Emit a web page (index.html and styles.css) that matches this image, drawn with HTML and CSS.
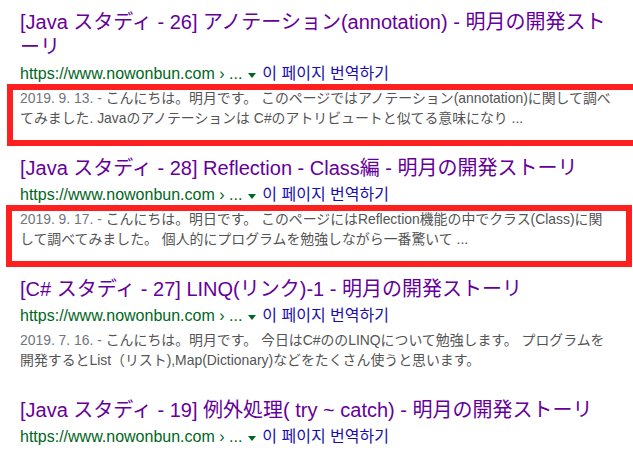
FILE: index.html
```html
<!DOCTYPE html>
<html lang="ja">
<head>
<meta charset="utf-8">
<title>Search results</title>
<link rel="stylesheet" href="styles.css">
</head>
<body>
<div class="results">
  <div class="result">
    <h3 class="title">[Java スタディ - 26] アノテーション(annotation) - 明月の開発スト<br>ーリ</h3>
    <div class="urlline"><span class="url">https://www.nowonbun.com › ...</span><span class="arrow"></span><span class="translate" lang="ko">이 페이지 번역하기</span></div>
    <div class="snippet"><span class="date">2019. 9. 13. - </span>こんにちは。明月です。 このページではアノテーション(annotation)に関して調べ<br>てみました. Javaのアノテーションは C#のアトリビュートと似てる意味になり ...</div>
  </div>
  <div class="result">
    <h3 class="title">[Java スタディ - 28] Reflection - Class編 - 明月の開発ストーリ</h3>
    <div class="urlline"><span class="url">https://www.nowonbun.com › ...</span><span class="arrow"></span><span class="translate" lang="ko">이 페이지 번역하기</span></div>
    <div class="snippet"><span class="date">2019. 9. 17. - </span>こんにちは。明日です。 このページにはReflection機能の中でクラス(Class)に関<br>して調べてみました。 個人的にプログラムを勉強しながら一番驚いて ...</div>
  </div>
  <div class="result">
    <h3 class="title">[C# スタディ - 27] LINQ(リンク)-1 - 明月の開発ストーリ</h3>
    <div class="urlline"><span class="url">https://www.nowonbun.com › ...</span><span class="arrow"></span><span class="translate" lang="ko">이 페이지 번역하기</span></div>
    <div class="snippet"><span class="date">2019. 7. 16. - </span>こんにちは。明月です。 今日はC#ののLINQについて勉強します。 プログラムを<br>開発するとList（リスト),Map(Dictionary)などをたくさん使うと思います。</div>
  </div>
  <div class="result">
    <h3 class="title">[Java スタディ - 19] 例外処理( try ~ catch) - 明月の開発ストーリ</h3>
    <div class="urlline"><span class="url">https://www.nowonbun.com › ...</span><span class="arrow"></span><span class="translate" lang="ko">이 페이지 번역하기</span></div>
    <div class="snippet"><span class="date">2019. 9. 9. - </span>こんにちは。明月です。 このページでは例外処理に関して調べてみました。 例外<br>処理は...</div>
  </div>
</div>
<div class="mark mark-1"></div>
<div class="mark mark-2"></div>
</body>
</html>
```
FILE: styles.css
```css
html, body {
  margin: 0;
  padding: 0;
  background: #ffffff;
  overflow: hidden;
}
body {
  width: 633px;
  height: 454px;
  position: relative;
  font-family: "Liberation Sans", Arial, "Noto Sans CJK JP", sans-serif;
}
.results {
  padding: 10px 0 0 20px;
  display: flex;
  flex-direction: column;
  gap: 28px;
}
.result {
  display: flex;
  flex-direction: column;
}
.title {
  margin: 0;
  font-size: 20px;
  line-height: 25px;
  font-weight: normal;
  color: #660099;
  white-space: nowrap;
}
.urlline {
  margin-top: 2px;
  font-size: 16px;
  line-height: 24px;
  white-space: nowrap;
  display: flex;
  align-items: center;
}
.url {
  color: #006621;
}
.arrow {
  width: 0;
  height: 0;
  border-left: 4px solid transparent;
  border-right: 4px solid transparent;
  border-top: 5px solid #006621;
  margin: 2px 6px 0 6px;
}
.translate {
  color: #1a0dab;
  font-family: "Liberation Sans", Arial, "Noto Sans CJK KR", sans-serif;
}
.snippet {
  margin-top: 2px;
  font-size: 13.9px;
  line-height: 20px;
  color: #545454;
  white-space: nowrap;
}
.date {
  color: #70757a;
}
.mark {
  position: absolute;
  border: 6px solid #fe1f1f;
  box-sizing: border-box;
}
.mark-1 {
  left: 7px;
  top: 84px;
  width: 640px;
  height: 62px;
}
.mark-2 {
  left: 6px;
  top: 205px;
  width: 626px;
  height: 62px;
}
```
